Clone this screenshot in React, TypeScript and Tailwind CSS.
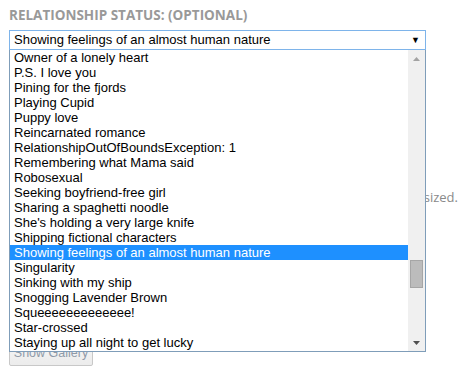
const options = [
  "Owner of a lonely heart",
  "P.S. I love you",
  "Pining for the fjords",
  "Playing Cupid",
  "Puppy love",
  "Reincarnated romance",
  "RelationshipOutOfBoundsException: 1",
  "Remembering what Mama said",
  "Robosexual",
  "Seeking boyfriend-free girl",
  "Sharing a spaghetti noodle",
  "She's holding a very large knife",
  "Shipping fictional characters",
  "Showing feelings of an almost human nature",
  "Singularity",
  "Sinking with my ship",
  "Snogging Lavender Brown",
  "Squeeeeeeeeeeeee!",
  "Star-crossed",
  "Staying up all night to get lucky",
];

const selected = "Showing feelings of an almost human nature";

export default function App() {
  return (
    <div className="relative w-[466px] h-[376px] bg-white overflow-hidden pl-[9px] pt-[6px]">
      <div className="text-[13.5px] leading-[19px] font-bold text-[#999999] font-['Open_Sans',sans-serif]">
        RELATIONSHIP STATUS: (OPTIONAL)
      </div>

      <div className="mt-[5px] w-[417px] h-[20px] border border-[#7eb4ea] bg-white flex items-center pl-[4px] pr-[5px] font-['Liberation_Sans',Arial,sans-serif] text-[13px] text-black">
        <span className="flex-1 truncate">{selected}</span>
        <span className="text-[9px] leading-none text-black">▼</span>
      </div>

      {/* page content hidden behind the open list */}
      <div className="mt-[138px] w-[449px] text-right text-[13px] leading-[18px] text-[#8a8a8a] font-['Open_Sans',sans-serif]">
        Images will be resized.
      </div>

      <button className="mt-[134px] w-[84px] h-[26px] border border-[#c8c8c8] rounded-[2px] bg-gradient-to-b from-[#f6f6f6] to-[#ececec] text-[12.5px] text-[#8f9aa8] font-['Liberation_Sans',Arial,sans-serif] flex items-center justify-center">
        Show Gallery
      </button>

      {/* open dropdown list */}
      <div className="absolute left-[9px] top-[50px] z-10 w-[417px] h-[302px] bg-white border-l border-r border-b border-[#7f9db9] flex">
        <ul className="flex-1 font-['Liberation_Sans',Arial,sans-serif] text-[13px] text-black">
          {options.map((o) =>
            o === selected ? (
              <li key={o} className="h-[15px] leading-[15px] pl-[4px] bg-[#1e90ff] text-white whitespace-nowrap">
                {o}
              </li>
            ) : (
              <li key={o} className="h-[15px] leading-[15px] pl-[4px] whitespace-nowrap">
                {o}
              </li>
            )
          )}
        </ul>
        <div className="w-[17px] bg-[#f0f0f0] flex flex-col items-center">
          <div className="h-[17px] flex items-center justify-center">
            <svg width="7" height="4" viewBox="0 0 7 4">
              <path d="M0 4 L3.5 0 L7 4 Z" fill="#a3a3a3" />
            </svg>
          </div>
          <div className="mt-[193px] w-[13px] h-[28px] bg-[#bcbcbc] border border-[#a6a6a6]" />
          <div className="mt-auto h-[17px] flex items-center justify-center">
            <svg width="7" height="4" viewBox="0 0 7 4">
              <path d="M0 0 L7 0 L3.5 4 Z" fill="#505050" />
            </svg>
          </div>
        </div>
      </div>
    </div>
  );
}
